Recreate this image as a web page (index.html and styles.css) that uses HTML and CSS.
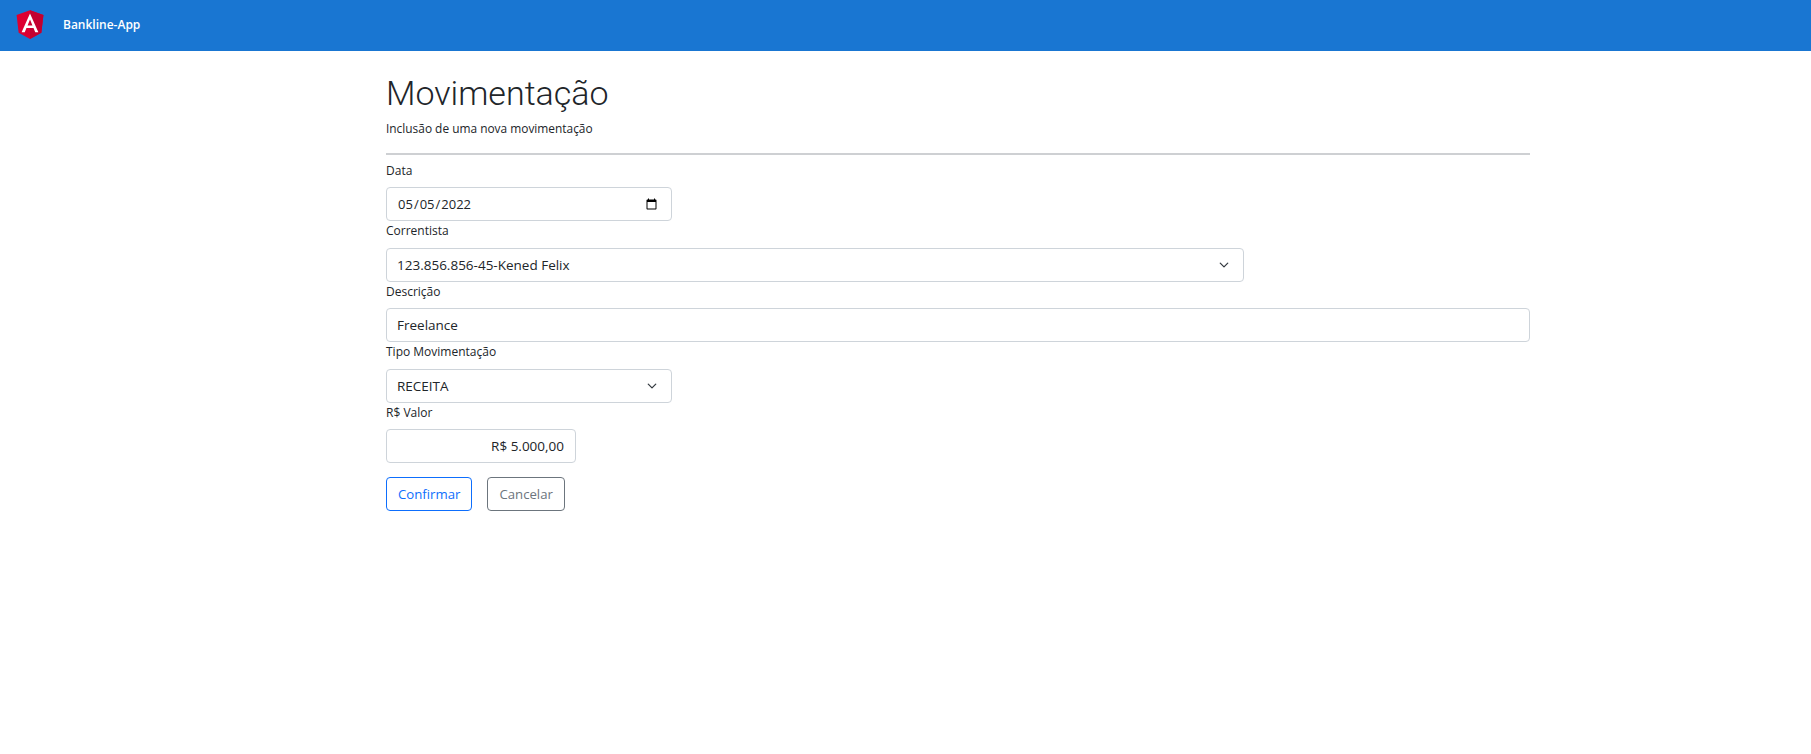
FILE: index.html
```html
<!DOCTYPE html>
<html lang="pt-BR">
<head>
  <meta charset="UTF-8">
  <title>Bankline-App</title>
  <link rel="stylesheet" href="styles.css">
</head>
<body>

  <nav class="navbar">
    <svg class="logo" viewBox="0 0 250 250" width="36" height="36">
      <polygon fill="#DD0031" points="125,30 31.9,63.2 46.1,186.3 125,230 203.9,186.3 218.1,63.2"/>
      <polygon fill="#C3002F" points="125,30 125,230 203.9,186.3 218.1,63.2"/>
      <path fill="#FFFFFF" d="M125,52.1L66.8,182.6h21.7l11.7-29.2h49.4l11.7,29.2h21.7L125,52.1z M142,135.4H108l17-40.9L142,135.4z"/>
    </svg>
    <span class="brand">Bankline-App</span>
  </nav>

  <main class="content">
    <h1>Movimentação</h1>
    <p class="lead">Inclusão de uma nova movimentação</p>
    <hr>

    <form>
      <label for="data">Data</label>
      <input class="field w-md" type="date" id="data" value="2022-05-05">

      <label for="correntista">Correntista</label>
      <select class="field w-lg" id="correntista">
        <option>123.856.856-45-Kened Felix</option>
      </select>

      <label for="descricao">Descrição</label>
      <input class="field" type="text" id="descricao" value="Freelance">

      <label for="tipo">Tipo Movimentação</label>
      <select class="field w-md" id="tipo">
        <option>RECEITA</option>
      </select>

      <label for="valor">R$ Valor</label>
      <input class="field w-sm align-right" type="text" id="valor" value="R$ 5.000,00">

      <div class="actions">
        <button type="button" class="btn btn-primary">Confirmar</button>
        <button type="button" class="btn btn-secondary">Cancelar</button>
      </div>
    </form>
  </main>

</body>
</html>
```

FILE: styles.css
```css
* {
  box-sizing: border-box;
}
body {
  margin: 0;
  font-family: "Open Sans", "Noto Sans", sans-serif;
  font-size: 14px;
  color: #212529;
  background-color: #fff;
}
.navbar {
  display: flex;
  align-items: flex-start;
  height: 51px;
  padding: 6px 12px;
  background-color: #1976d2;
  color: #fff;
}
.brand {
  margin: 10px 0 0 15px;
  font-size: 12px;
  font-weight: 600;
  line-height: 18px;
}
.content {
  width: 1144px;
  margin-left: 386px;
}
h1 {
  margin: 19px 0 0;
  font-family: Roboto, sans-serif;
  font-size: 34px;
  font-weight: 300;
  line-height: 46px;
}
.lead {
  margin: 3px 0 0;
  font-size: 11.9px;
  line-height: 18px;
}
hr {
  margin: 16px 0 0;
  border: 0;
  border-top: 2px solid #ced0d3;
}
form {
  padding-top: 7px;
}
label {
  display: block;
  margin-bottom: 7px;
  font-size: 12px;
  line-height: 18.4px;
}
label + .field {
  margin-bottom: 1px;
}
.field {
  display: block;
  width: 100%;
  height: 34px;
  padding: 0 11px 0 10px;
  font-family: inherit;
  font-size: 13.5px;
  color: #212529;
  background-color: #fff;
  border: 1px solid #ced4da;
  border-radius: 4px;
}
input[type="date"] {
  font-size: 13px;
}
select.field {
  appearance: none;
  padding-right: 36px;
  background-image: url("data:image/svg+xml,%3csvg xmlns='http://www.w3.org/2000/svg' viewBox='0 0 16 16'%3e%3cpath fill='none' stroke='%23343a40' stroke-linecap='round' stroke-linejoin='round' stroke-width='2' d='M2 5l6 6 6-6'/%3e%3c/svg%3e");
  background-repeat: no-repeat;
  background-position: right 12px center;
  background-size: 14px 10px;
}
.w-sm {
  width: 190px;
}
.w-md {
  width: 286px;
}
.w-lg {
  width: 858px;
}
.align-right {
  text-align: right;
}
.actions {
  display: flex;
  gap: 15px;
  margin-top: 14px;
}
.btn {
  height: 34px;
  padding: 0 11px;
  font-family: inherit;
  font-size: 13.2px;
  background-color: transparent;
  border-radius: 4px;
}
.btn-primary {
  color: #0d6efd;
  border: 1px solid #0d6efd;
}
.btn-secondary {
  color: #6c757d;
  border: 1px solid #6c757d;
}
```
